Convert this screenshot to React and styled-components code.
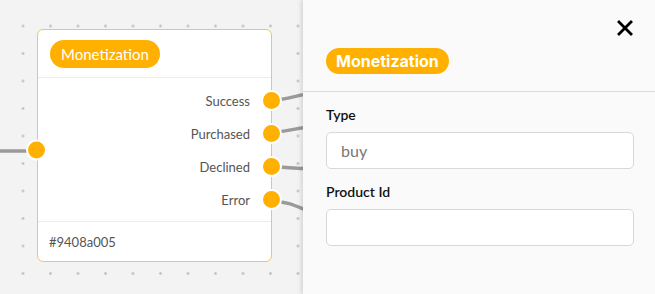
import styled, { createGlobalStyle } from 'styled-components';

const GlobalStyle = createGlobalStyle`
    html, body, #root {
        margin: 0;
        padding: 0;
        width: 100%;
        height: 100%;
    }
    body {
        font-family: Lato, "Noto Sans", sans-serif;
        overflow: hidden;
    }
`;

const Page = styled.div`
    display: flex;
    width: 655px;
    height: 294px;
    overflow: hidden;
`;

const Canvas = styled.section`
    position: relative;
    flex: 1;
    background-color: #f3f3f3;
    background-image: radial-gradient(circle at 1.5px 1.5px, #c4c4c4 1.1px, transparent 1.6px);
    background-size: 27.5px 27.5px;
    background-position: 21.5px 24.5px;
`;

const Edges = styled.svg`
    position: absolute;
    left: 0;
    top: 0;
    width: 100%;
    height: 100%;
    path {
        fill: none;
        stroke: #9a9a9a;
        stroke-width: 3.5;
    }
`;

const NodeCard = styled.article`
    position: absolute;
    left: 37px;
    top: 29px;
    width: 235px;
    height: 233px;
    box-sizing: border-box;
    display: flex;
    flex-direction: column;
    background: #fff;
    border: 1px solid #f4c65a;
    border-radius: 6px;
`;

const NodeHeader = styled.header`
    height: 49px;
    box-sizing: border-box;
    display: flex;
    align-items: center;
    padding: 0 12px;
    border-bottom: 1px solid #ececec;
`;

const Badge = styled.span`
    display: inline-flex;
    align-items: center;
    height: ${p => p.$h}px;
    padding: 0 ${p => p.$px}px;
    border-radius: ${p => p.$h / 2}px;
    background: #ffb000;
    color: #fff;
    font-family: ${p => p.$bold ? 'Inter, "Liberation Sans", sans-serif' : 'Lato, sans-serif'};
    font-weight: ${p => p.$bold ? 700 : 400};
    font-size: ${p => p.$size}px;
    white-space: nowrap;
`;

const NodeBody = styled.div`
    position: relative;
    flex: 1;
    padding: 6px 0 5px;
    border-bottom: 1px solid #ececec;
`;

const OutputRow = styled.div`
    height: 33px;
    display: flex;
    align-items: center;
    justify-content: flex-end;
    gap: 11px;
    margin-right: -11px;
    font-size: 13px;
    color: #555;
`;

const Port = styled.span`
    width: 17px;
    height: 17px;
    border-radius: 50%;
    background: #ffb000;
    border: 2px solid #fff;
    flex-shrink: 0;
`;

const InputPort = styled(Port)`
    position: absolute;
    left: -12px;
    top: 50%;
    transform: translateY(-50%);
`;

const NodeFooter = styled.footer`
    height: 39px;
    display: flex;
    align-items: center;
    padding: 0 11px;
    font-size: 13px;
    color: #555;
`;

const Panel = styled.aside`
    width: 352px;
    flex-shrink: 0;
    background: #fafafa;
    box-shadow: -2px 0 4px rgba(0, 0, 0, 0.12);
    z-index: 1;
    display: flex;
    flex-direction: column;
`;

const PanelHeader = styled.header`
    height: 92px;
    box-sizing: border-box;
    padding: 19px 21px 0 23px;
    border-bottom: 1px solid #dcdcdc;
    display: flex;
    flex-direction: column;
`;

const CloseButton = styled.button`
    align-self: flex-end;
    border: none;
    background: none;
    padding: 0;
    width: 18px;
    height: 18px;
    cursor: pointer;
    display: flex;
`;

const BadgeRow = styled.div`
    margin-top: 11px;
`;

const PanelBody = styled.div`
    padding: 14px 21px 0 23px;
    display: flex;
    flex-direction: column;
`;

const Label = styled.label`
    font-size: 14px;
    font-weight: 600;
    color: #111;
    margin-bottom: 8px;
    line-height: 18px;
`;

const Field = styled.input`
    height: 37px;
    box-sizing: border-box;
    border: 1px solid #d8d8d8;
    border-radius: 5px;
    background: #fff;
    padding: 0 14px;
    font-family: Lato, sans-serif;
    font-size: 16px;
    color: #777;
    margin-bottom: 14px;
    outline: none;
`;

const outputs = ['Success', 'Purchased', 'Declined', 'Error'];

export default function App () {
    return (
        <Page>
            <GlobalStyle />
            <Canvas>
                <Edges>
                    <path d="M0 151 L37 151" />
                    <path d="M270 101 C 290 99, 300 94, 330 90" />
                    <path d="M270 133 C 290 131, 300 127, 330 124" />
                    <path d="M270 167 C 290 167, 300 169, 330 170" />
                    <path d="M270 201 C 288 201, 296 206, 320 216" />
                </Edges>
                <NodeCard>
                    <NodeHeader>
                        <Badge $h={28} $px={11} $size={15}>Monetization</Badge>
                    </NodeHeader>
                    <NodeBody>
                        <InputPort />
                        {outputs.map(name => (
                            <OutputRow key={name}>
                                <span>{name}</span>
                                <Port />
                            </OutputRow>
                        ))}
                    </NodeBody>
                    <NodeFooter>#9408a005</NodeFooter>
                </NodeCard>
            </Canvas>
            <Panel>
                <PanelHeader>
                    <CloseButton aria-label="Close">
                        <svg width="18" height="18" viewBox="0 0 18 18">
                            <path d="M3 3 L15 15 M15 3 L3 15" stroke="#000" strokeWidth="2.8" strokeLinecap="square" />
                        </svg>
                    </CloseButton>
                    <BadgeRow>
                        <Badge $h={26} $px={10} $size={16} $bold>Monetization</Badge>
                    </BadgeRow>
                </PanelHeader>
                <PanelBody>
                    <Label>Type</Label>
                    <Field defaultValue="buy" />
                    <Label>Product Id</Label>
                    <Field />
                </PanelBody>
            </Panel>
        </Page>
    )
};
